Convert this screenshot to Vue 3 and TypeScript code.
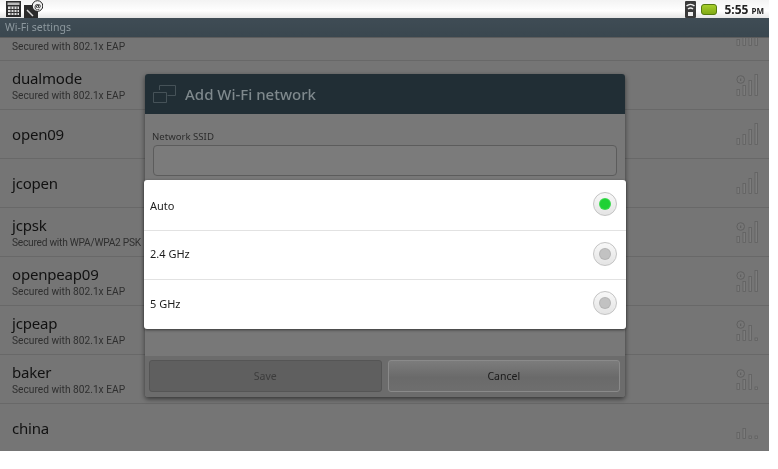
<script setup lang="ts">
interface Net { name: string; sub?: string; lock: boolean; level: number; clip?: boolean; tight?: boolean }
const nets: Net[] = [
  { name: '', sub: 'Secured with 802.1x EAP', lock: false, level: 4, clip: true },
  { name: 'dualmode', sub: 'Secured with 802.1x EAP', lock: true, level: 4 },
  { name: 'open09', lock: false, level: 4 },
  { name: 'jcopen', lock: false, level: 4 },
  { name: 'jcpsk', sub: 'Secured with WPA/WPA2 PSK', lock: true, level: 4, tight: true },
  { name: 'openpeap09', sub: 'Secured with 802.1x EAP', lock: true, level: 4 },
  { name: 'jcpeap', sub: 'Secured with 802.1x EAP', lock: true, level: 3 },
  { name: 'baker', sub: 'Secured with 802.1x EAP', lock: true, level: 3 },
  { name: 'china', lock: false, level: 2 }
]
const bars = [
  { x: 1, h: 6 },
  { x: 7, h: 10 },
  { x: 13, h: 15 },
  { x: 19, h: 21 }
]
const barHeight = (i: number, level: number, h: number) => (i < level ? h : 2.5)
const bands = [
  { label: 'Auto', on: true },
  { label: '2.4 GHz', on: false },
  { label: '5 GHz', on: false }
]
</script>

<template>
  <div class="screen">
    <header class="status">
      <div class="status-left">
        <svg width="15" height="16" viewBox="0 0 15 16">
          <rect width="15" height="16" fill="#2b2b2b" />
          <rect x="1.500" y="1.500" width="12" height="2.500" fill="#bbb" />
          <rect x="2" y="5.500" width="11" height="8.500" fill="#ddd" />
          <path d="M5 5.500V14M8 5.500V14M11 5.500V14M2 8.500h11M2 11.500h11" stroke="#333" stroke-width="1" />
        </svg>
        <svg width="19" height="18" viewBox="0 0 19 18">
          <rect x="0" y="5" width="14" height="13" fill="#2a2a2a" />
          <path d="M3 10l6 6" stroke="#d8d8d8" stroke-width="1.500" />
          <circle cx="13.500" cy="6" r="5.300" fill="#f2f2f2" stroke="#222" />
          <text x="13.500" y="8.500" text-anchor="middle" class="at">@</text>
        </svg>
      </div>
      <div class="status-right">
        <svg width="11" height="17" viewBox="0 0 11 17">
          <rect width="11" height="17" rx="1" fill="#3a3a3a" />
          <path d="M1.500 5a6 6 0 0 1 8 0M3 8a4 4 0 0 1 5 0" fill="none" stroke="#eee" stroke-width="1.500" />
          <rect x="3" y="11" width="5" height="4" fill="#eee" />
        </svg>
        <svg width="16" height="11" viewBox="0 0 16 11">
          <defs>
            <linearGradient id="batt" x1="0" y1="0" x2="0" y2="1">
              <stop offset="0" stop-color="#a9d12c" />
              <stop offset="1" stop-color="#7fa814" />
            </linearGradient>
          </defs>
          <rect x="0.500" y="0.500" width="15" height="10" rx="2.500" fill="url(#batt)" stroke="#557a10" />
        </svg>
        <span class="clock">5:55 <small>PM</small></span>
      </div>
    </header>
    <div class="titlebar">Wi-Fi settings</div>

    <ul class="list">
      <li v-for="n in nets" :key="n.name" class="row" :class="{ clip: n.clip }">
        <div class="row-text">
          <div v-if="n.name" class="row-name">{{ n.name }}</div>
          <div v-if="n.sub" class="row-sub" :class="{ tight: n.tight }">{{ n.sub }}</div>
        </div>
        <svg class="signal" width="22" height="24" viewBox="0 0 22 24">
          <g v-if="n.lock">
            <circle cx="4.700" cy="7.500" r="3.800" fill="#767676" stroke="#606060" />
            <path d="M4.700 6.500v2.500" stroke="#5c5c5c" />
          </g>
          <rect
            v-for="(b, i) in bars"
            :key="i"
            :x="b.x"
            :y="23.500 - barHeight(i, n.level, b.h)"
            width="2.500"
            :height="barHeight(i, n.level, b.h)"
            fill="#7c7c7c"
            stroke="#616161"
            stroke-width="0.800"
          />
        </svg>
      </li>
    </ul>

    <section class="dialog">
      <div class="dialog-head">
        <svg width="23" height="20" viewBox="0 0 23 20" fill="none" stroke="#465258" stroke-width="1">
          <path d="M6.500 6V1.500h16v10h-8" />
          <path d="M.5 8.500h13v10H.5z" />
        </svg>
        <h2>Add Wi-Fi network</h2>
      </div>
      <div class="dialog-body">
        <label>Network SSID</label>
        <div class="field"></div>
      </div>
      <div class="dialog-foot">
        <button class="btn save">Save</button>
        <button class="btn cancel">Cancel</button>
      </div>
    </section>

    <section class="popup">
      <div v-for="b in bands" :key="b.label" class="band">
        <span class="band-label">{{ b.label }}</span>
        <span class="radio"><i :class="{ on: b.on }"></i></span>
      </div>
    </section>
  </div>
</template>

<style>
html, body { margin: 0; background: #fff; }
</style>

<style scoped>
.screen {
  position: relative;
  width: 769px;
  height: 451px;
  overflow: hidden;
  background: #757575;
  font-family: "Noto Sans", "Open Sans", sans-serif;
  display: flex;
  flex-direction: column;
  filter: blur(0.35px);
}
.status {
  height: 18px;
  flex: none;
  background: linear-gradient(#f3f3f3, #fff 60%, #e6e6e6);
  display: flex;
  justify-content: space-between;
  align-items: center;
  padding: 0 5px 0 6px;
}
.status-left, .status-right { display: flex; align-items: center; }
.status-left { gap: 3px; }
.status-right { gap: 5px; }
.clock { font-size: 12px; font-weight: 700; color: #222; margin-left: 2px; white-space: nowrap; }
.clock small { font-size: 8px; }
.at { font-family: "Noto Sans", sans-serif; font-size: 7.500px; font-weight: 700; fill: #222; }
.titlebar {
  height: 20px;
  flex: none;
  box-sizing: border-box;
  background: linear-gradient(#3f4c55, #3a474f);
  border-bottom: 1px solid #5d5d5d;
  color: #8d989e;
  font-size: 10.500px;
  line-height: 18px;
  padding-left: 5px;
}
.list { list-style: none; margin: 0; padding: 0; }
.row {
  height: 49px;
  box-sizing: border-box;
  border-bottom: 1px solid #686868;
  padding: 0 12px;
  display: flex;
  justify-content: space-between;
  align-items: center;
  color: #111;
}
.row.clip { height: 23px; align-items: flex-start; overflow: hidden; }
.row.clip .signal { margin-top: -16px; }
.row.clip .row-sub { margin-top: 2px; }
.row-name { font-size: 15px; line-height: 19px; letter-spacing: -0.2px; }
.row-sub {
  font-family: Roboto, "Noto Sans", sans-serif;
  font-size: 10.200px;
  line-height: 13px;
  margin-top: 1px;
  color: #2f2f2f;
  white-space: nowrap;
}
.row-sub.tight { letter-spacing: -0.25px; }
.signal { margin: 0 -1px 3px 0; flex: none; }
.dialog {
  position: absolute;
  left: 145px;
  top: 74px;
  width: 480px;
  height: 323px;
  box-sizing: border-box;
  background: #787878;
  border-radius: 3px;
  box-shadow: 0 2px 5px rgba(0, 0, 0, .55);
  display: flex;
  flex-direction: column;
  overflow: hidden;
}
.dialog-head {
  height: 40px;
  flex: none;
  background: #212e35;
  display: flex;
  align-items: center;
  gap: 9px;
  padding-left: 8px;
}
.dialog-head h2 {
  margin: 0;
  font-size: 15px;
  font-weight: 500;
  color: #7f898d;
}
.dialog-body { flex: 1; padding: 16px 8px 0; }
.dialog-body label { display: block; font-size: 9.600px; line-height: 14px; color: #2c2c2c; margin-left: -1px; }
.field {
  height: 29px;
  margin-top: 1px;
  border: 1px solid #5c5c5c;
  border-radius: 4px;
  background: #7b7b7b;
}
.dialog-foot {
  height: 41px;
  flex: none;
  box-sizing: border-box;
  background: #6c6c6c;
  padding: 4px 5px 5px 4px;
  display: flex;
  gap: 6px;
}
.btn {
  flex: 1;
  border-radius: 3px;
  font-family: inherit;
  font-size: 10.500px;
  padding: 0;
}
.save { background: #5f5f5f; border: 1px solid #555; color: #3c3c3c; }
.cancel {
  background: linear-gradient(#7c7c7c, #6a6a6a 55%, #6e6e6e);
  border: 1px solid #8a8a8a;
  color: #1a1a1a;
}
.popup {
  position: absolute;
  left: 144px;
  top: 180px;
  width: 481.500px;
  height: 149px;
  background: #fff;
  border-radius: 3px;
  box-shadow: 0 1px 3px rgba(0, 0, 0, .55);
  display: flex;
  flex-direction: column;
}
.band {
  height: 49px;
  box-sizing: border-box;
  display: flex;
  align-items: center;
  justify-content: space-between;
  padding: 0 9px 3px 6px;
  font-size: 11px;
  color: #1c1c1c;
  border-bottom: 1px solid #e2e2e2;
}
.band:first-child { height: 51px; padding-bottom: 2px; }
.band:first-child .band-label { margin-top: 2px; }
.band:last-child { border-bottom: 0; }
.radio {
  width: 24px;
  height: 24px;
  box-sizing: border-box;
  border-radius: 50%;
  border: 1px solid #c4c4c4;
  background: linear-gradient(#f8f8f8, #e4e4e4);
  display: flex;
  align-items: center;
  justify-content: center;
}
.radio i {
  width: 10px;
  height: 10px;
  border-radius: 50%;
  background: #c2c2c2;
  box-shadow: 0 0 0 1px #b4b4b4;
}
.radio i.on { background: #1fd135; box-shadow: 0 0 0 1px #3bd94e; }
</style>
